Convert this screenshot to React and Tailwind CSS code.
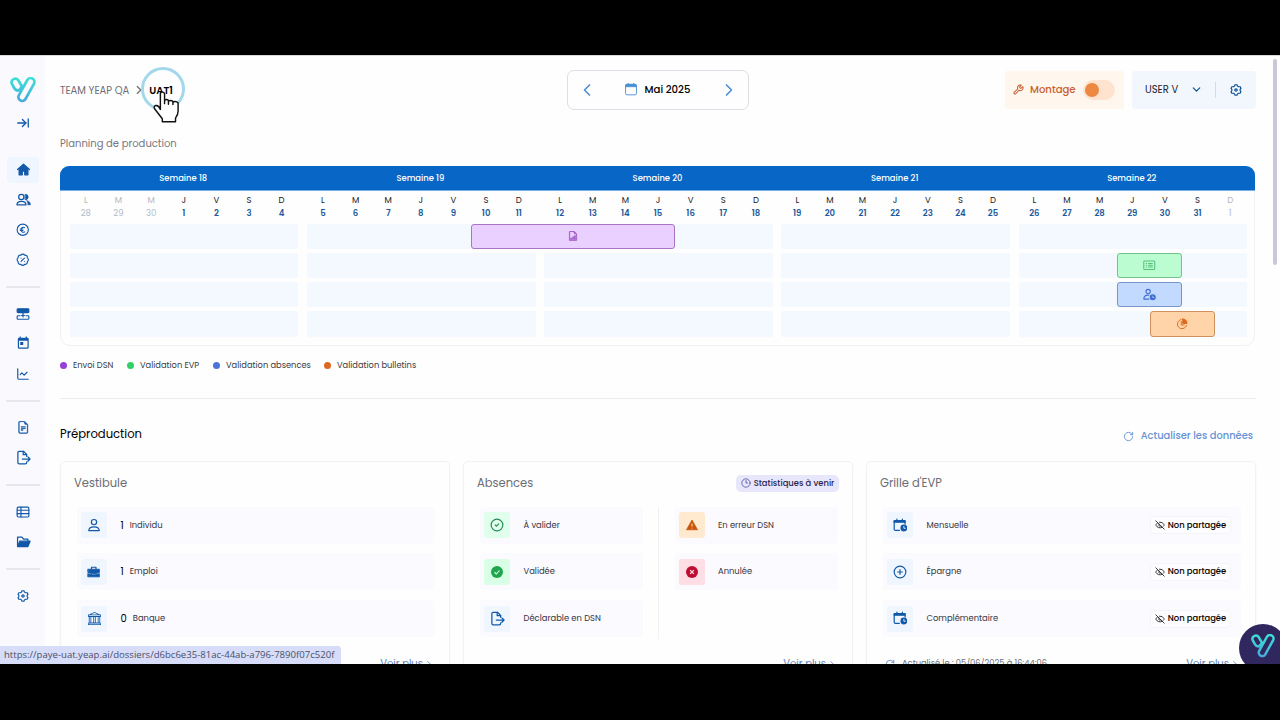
import { ArrowRightToLine, ChevronLeft, ChevronRight, ChevronDown, Wrench, RotateCw, Clock3, EyeOff, CirclePlus, CircleCheck, BadgePercent, ChartLine } from 'lucide-react';
import { BsBank, BsFileEarmarkText, BsFileEarmarkBarGraph } from 'react-icons/bs';
import { RiSettings3Line } from 'react-icons/ri';
import { MdToday } from 'react-icons/md';

const WEEKS = [18, 19, 20, 21, 22];
const LETTERS = ['L', 'M', 'M', 'J', 'V', 'S', 'D'];
const FIRST_DAY = -2; // monday 28 april
const DAY_W = 32.69;
const WEEK_W = 237.2;

function Svg({ size = 14, children, className = '' }) {
  return (
    <svg width={size} height={size} viewBox="0 0 24 24" fill="none" stroke="currentColor" strokeWidth="2" strokeLinecap="round" strokeLinejoin="round" className={className}>
      {children}
    </svg>
  );
}

function Logo({ id, className }) {
  return (
    <svg viewBox="0 0 26 26" fill="none" stroke={`url(#${id})`} strokeWidth="2.7" strokeLinecap="round" strokeLinejoin="round" className={className}>
      <defs>
        <linearGradient id={id} x1="0" y1="0" x2="0" y2="26" gradientUnits="userSpaceOnUse">
          <stop offset="0" stopColor="#3be3d6" />
          <stop offset="1" stopColor="#47a6dc" />
        </linearGradient>
      </defs>
      <path d="M12 9.500 8.300 3.300A3.700 3.700 0 0 0 1.800 6.700L4.200 11A4.500 4.500 0 0 0 9 13.300L12 9.500" />
      <path d="M17.300 3 8.900 18.200A3.750 3.750 0 0 0 15.500 22L23.900 6.800A3.750 3.750 0 0 0 17.300 3Z" />
    </svg>
  );
}

const Home = () => (
  <Svg size={15}>
    <path d="M2.500 12 12 3.500 21.500 12" />
    <path d="M5 11v9.500h5v-6h4v6h5V11l-7-6z" fill="currentColor" />
  </Svg>
);
const Users = () => (
  <Svg size={15}>
    <circle cx="8.500" cy="8" r="4.200" />
    <path d="M1.500 20.500c0-7.500 14.500-7.500 14.500 0z" />
    <path d="M15 3.500a4.500 4.500 0 0 1 0 9zM17.500 14c4 .8 5.500 3 5.500 6.500h-4c0-3-.3-4.500-1.500-6.500z" fill="currentColor" strokeWidth="1" />
  </Svg>
);
const Euro = () => (
  <Svg size={13.5}>
    <circle cx="12" cy="12" r="10" />
    <path d="M15.500 8.300c-3-2.200-6.500 0-6.500 3.700s3.500 5.900 6.500 3.700M7.500 10.800h5M7.500 13.400h5" strokeWidth="1.800" />
  </Svg>
);
const Blocks = () => (
  <Svg size={14}>
    <rect x="2" y="3" width="20" height="6.500" rx="1.500" fill="currentColor" />
    <path d="M12 10v7M9.500 14.500h5M7 15H3.500a1.500 1.500 0 0 0-1.500 1.500v3A1.500 1.500 0 0 0 3.500 21h17a1.500 1.500 0 0 0 1.500-1.500v-3a1.500 1.500 0 0 0-1.500-1.500H17" />
  </Svg>
);
const FileExport = ({ size = 15 }) => (
  <Svg size={size}>
    <path d="M17 10V7l-5-5H5a2 2 0 0 0-2 2v16a2 2 0 0 0 2 2h10a2 2 0 0 0 2-2v-1" />
    <path d="M11.500 2v5.500H17" />
    <path d="M10 14.500h12.500M19 11l3.500 3.500L19 18" />
  </Svg>
);
const Table = () => (
  <Svg size={14}>
    <rect x="2" y="3.500" width="20" height="17" rx="2" />
    <path d="M2 9h20M2 14.800h20M8.500 3.500v17" />
  </Svg>
);
const Folder = () => (
  <Svg size={15}>
    <path d="M2.500 19V5h7l2.500 3h7v3" />
    <path d="M2.500 20 6 11.500h16.500L19 20z" fill="currentColor" />
  </Svg>
);
const Person = () => (
  <Svg size={14}>
    <circle cx="12" cy="7" r="4.500" />
    <path d="M3 21.500c.5-8.500 17.500-8.500 18 0z" />
  </Svg>
);
const Briefcase = () => (
  <Svg size={13.5}>
    <path d="M2 7.500h20v6l-8 2h-4l-8-2zM2 15.500l8 2h4l8-2V21H2z" fill="currentColor" strokeWidth="1.500" />
    <path d="M8 7V4h8v3" />
  </Svg>
);
const CalClock = () => (
  <Svg size={14.5}>
    <path d="M10.500 20.500H4a2 2 0 0 1-2-2V5h18v5" />
    <path d="M2 4.500h18V7H2z" fill="currentColor" />
    <path d="M6.500 2v3M15.500 2v3" />
    <circle cx="18" cy="16.500" r="4.700" fill="currentColor" />
    <path d="M18 14v3h2.300" stroke="#eef5ff" strokeWidth="1.500" />
  </Svg>
);
const PersonClock = () => (
  <Svg size={13}>
    <circle cx="9.500" cy="6.500" r="4" />
    <path d="M11 20.500H1.500c0-6 4-8 9.500-7.200" />
    <circle cx="18" cy="17" r="4.600" fill="currentColor" />
    <path d="M18 15v2.500h2" stroke="#c4daff" strokeWidth="1.300" />
  </Svg>
);
const ListCard = () => (
  <Svg size={12.5}>
    <rect x="1.500" y="4" width="21" height="16" rx="1.500" />
    <path d="M6 8.500h1M6 12h1M6 15.500h1M10.500 8.500H18M10.500 12H18M10.500 15.500H18" />
  </Svg>
);
const Pie = () => (
  <Svg size={12}>
    <path d="M10 3a9.300 9.300 0 1 0 11 12" />
    <path d="M10.500 7v7h6" />
    <path d="M13.500 2v9H22a9 9 0 0 0-8.500-9z" fill="currentColor" />
  </Svg>
);
const Warning = () => (
  <svg width="12" height="12" viewBox="0 0 24 24">
    <path d="M12 2 23 21.500H1z" fill="#c9540c" stroke="#c9540c" strokeWidth="1.500" strokeLinejoin="round" />
    <path d="M12 9v6M12 17.500v1.500" stroke="#ffe3c2" strokeWidth="2" />
  </svg>
);
const CheckSolid = () => (
  <svg width="12" height="12" viewBox="0 0 24 24">
    <circle cx="12" cy="12" r="12" fill="#1fa64c" />
    <path d="m7 12.500 3.500 3.500 6.500-7" fill="none" stroke="#dcffe8" strokeWidth="2.200" />
  </svg>
);
const CrossSolid = () => (
  <svg width="12" height="12" viewBox="0 0 24 24">
    <circle cx="12" cy="12" r="12" fill="#bd0d33" />
    <path d="m8.300 8.300 7.400 7.400m0-7.400-7.400 7.400" stroke="#ffe1e7" strokeWidth="2.600" />
  </svg>
);

const NAV = [
  [<Home />, <Users />, <Euro />, <BadgePercent size={13.5} />],
  [<Blocks />, <MdToday size={14.5} />, <ChartLine size={14} />],
  [<BsFileEarmarkText size={12.5} strokeWidth={0.5} />, <FileExport />],
  [<Table />, <Folder />],
  [<RiSettings3Line size={14} />],
];

function Sidebar() {
  return (
    <aside className="flex w-[45px] shrink-0 flex-col items-center bg-[#faf9fe] pr-px text-[#1159a8]">
      <Logo id="logo-side" className="mt-[21px] ml-[2px] h-[26px] w-[26px]" />
      <ArrowRightToLine size={14} strokeWidth={2.200} className="mt-[13px] ml-[2px]" />
      <nav className="mt-[24.500px] flex w-full flex-col items-center pl-[2px]">
        {NAV.map((group, g) => (
          <div key={g} className="flex flex-col items-center">
            {g > 0 && <div className="my-[11px] h-[2px] w-[34px] bg-[#e8e7ee]" />}
            {group.map((icon, i) => (
              <div key={i} className="flex h-[30px] items-center">
                <div className={`flex h-[26px] w-8 items-center justify-center rounded-sm ${g === 0 && i === 0 ? 'bg-[#eff6ff]' : ''}`}>{icon}</div>
              </div>
            ))}
          </div>
        ))}
      </nav>
    </aside>
  );
}

function Header() {
  return (
    <header className="grid h-10 grid-cols-[1fr_auto_1fr] items-center">
      <div className="flex items-center pt-px text-[10px] text-[#6d6d75]">
        <span>TEAM YEAP QA</span>
        <ChevronRight size={14} strokeWidth={2} className="ml-[3px]" />
        <span className="ml-[3px] font-semibold text-black">UAT1</span>
      </div>
      <div className="flex h-10 w-[182px] items-center justify-between rounded-[7px] border border-[#dedee6] px-[9px] text-[#4b8fd6]">
        <ChevronLeft size={20} strokeWidth={2} />
        <div className="flex items-center gap-[7px]">
          <svg width="12" height="14" viewBox="0 0 13 14" fill="none" stroke="currentColor">
            <rect x=".6" y="2" width="11.800" height="11.300" rx="1.500" />
            <path d="M1 2h11v2.500H1z" fill="currentColor" />
            <path d="M3.500 .5v2M9.500 .5v2" />
          </svg>
          <span className="text-[10.200px] font-medium text-black">Mai 2025</span>
        </div>
        <ChevronRight size={20} strokeWidth={2} />
      </div>
      <div className="flex h-[38px] justify-end gap-2">
        <div className="flex w-[119px] items-center rounded-[3px] bg-[#fff6ee] pl-[8px] text-[#c85f2c]">
          <Wrench size={11} strokeWidth={2.200} className="shrink-0" />
          <span className="ml-[6px] w-[45px] text-[10.100px] font-medium">Montage</span>
          <div className="ml-[8px] h-5 w-8 rounded-full bg-[#ffe3cf] p-[3px] pl-[2px]">
            <div className="h-[14px] w-[14px] rounded-full bg-[#ec8840]" />
          </div>
        </div>
        <div className="flex w-[124px] items-center rounded-[3px] bg-[#f2f7fe] pl-[13px] text-[#0b4f93]">
          <span className="w-[34px] whitespace-nowrap text-[10px] text-[#26262e]">USER V</span>
          <ChevronDown size={13} strokeWidth={2.200} className="ml-[11px]" />
          <div className="ml-[12px] h-4 w-px bg-[#d3dbe8]" />
          <RiSettings3Line size={14} className="ml-[13px]" />
        </div>
      </div>
    </header>
  );
}

// start / end are counted in days from monday 28 april
const EVENTS = [
  { start: 12, end: 17, cls: 'bg-[#ead0fe] border-[#a875c6] text-[#9a4fc0]', icon: <BsFileEarmarkBarGraph size={10} strokeWidth={0.5} /> },
  { start: 31, end: 32, cls: 'bg-[#bbfdd0] border-[#74c18e] text-[#55c27a]', icon: <ListCard /> },
  { start: 31, end: 32, cls: 'bg-[#c2daff] border-[#7894c9] text-[#416ed0]', icon: <PersonClock /> },
  { start: 32, end: 33, cls: 'bg-[#ffd4a8] border-[#cf9060] text-[#dc6a1b]', icon: <Pie /> },
];

const dayX = (n) => Math.floor(n / 7) * WEEK_W + (n % 7) * DAY_W;

function Planning() {
  return (
    <section className="mt-3 h-[179.500px] w-[1195px] rounded-[10px] border border-[#f0f0f5]">
      <div className="-mx-px -mt-px grid h-[25px] grid-cols-5 gap-[8.7px] rounded-t-[9px] border-b border-[#75aee8] bg-[#0866c6] px-[9px]">
        {WEEKS.map((w) => (
          <div key={w} className="flex items-center justify-center text-[8.400px] font-medium text-white">Semaine {w}</div>
        ))}
      </div>
      <div className="mt-[3px] grid grid-cols-5 gap-[8.700px] pr-[7.500px] pl-[8.500px]">
        {WEEKS.map((w, wi) => (
          <div key={w} className="grid grid-cols-7 text-center text-[8.500px] leading-[12.500px]">
            {LETTERS.map((l, di) => {
              const n = FIRST_DAY + wi * 7 + di;
              const out = n < 1 || n > 31;
              const day = n < 1 ? n + 30 : n > 31 ? n - 31 : n;
              return (
                <div key={di}>
                  <div className={out ? 'text-[#b5b5bd]' : 'text-[#202028]'}>{l}</div>
                  <div className={out ? 'text-[#b0bccd]' : 'font-semibold text-[#1d5a9c]'}>{day}</div>
                </div>
              );
            })}
          </div>
        ))}
      </div>
      <div className="mt-[4.500px] flex flex-col gap-[3.600px] pr-[7px] pl-[9px]">
        {EVENTS.map((e, i) => (
          <div key={i} className="relative grid grid-cols-5 gap-[8.700px]">
            {WEEKS.map((w) => (
              <div key={w} className="h-[25.600px] rounded-[2px] bg-[#f4f8ff]" />
            ))}
            <div
              className={`absolute inset-y-0 flex items-center justify-center rounded-[3px] border ${e.cls}`}
              style={{ left: dayX(e.start), width: dayX(e.end) + DAY_W - dayX(e.start) }}
            >
              {e.icon}
            </div>
          </div>
        ))}
      </div>
    </section>
  );
}

function Legend() {
  return (
    <div className="mt-[11.500px] flex h-4 items-center text-[8.300px] text-[#3a3a42]">
      <div className="flex w-[67px] items-center gap-[6px] whitespace-nowrap"><i className="h-[7px] w-[7px] rounded-full bg-[#9540d8]" />Envoi DSN</div>
      <div className="flex w-[86px] items-center gap-[6px] whitespace-nowrap"><i className="h-[7px] w-[7px] rounded-full bg-[#32cf62]" />Validation EVP</div>
      <div className="flex w-[111px] items-center gap-[6px] whitespace-nowrap"><i className="h-[7px] w-[7px] rounded-full bg-[#4b74d8]" />Validation absences</div>
      <div className="flex items-center gap-[6px] whitespace-nowrap"><i className="h-[7px] w-[7px] rounded-full bg-[#dd6820]" />Validation bulletins</div>
    </div>
  );
}

function Card({ title, badge, children, note }) {
  return (
    <div className="flex h-[230px] flex-col rounded-[5px] border border-[#f2f2f6] px-[13px] pt-[12px] shadow-[0_1px_2px_rgba(40,40,80,0.05)]">
      <div className="flex h-[18px] items-center justify-between text-[11.500px] text-[#6d6d75]">
        <span className="pt-[2px]">{title}</span>
        {badge}
      </div>
      <div className="mt-[14.500px] h-[132px]">{children}</div>
      <div className="mt-[17px] flex h-4 items-center justify-between pr-[2px] pl-[5px] text-[10px] text-[#5b83b8]">
        <span className="flex items-center gap-[7px] text-[8.300px] text-[#6d6d75]">{note}</span>
        <span className="flex items-center gap-px">Voir plus <ChevronRight size={10} /></span>
      </div>
    </div>
  );
}

function Item({ icon, tone = 'bg-[#eff6ff] text-[#1159a8]', count, label, right }) {
  return (
    <div className="flex h-[37px] items-center rounded-[3px] bg-[#fbfaff] pl-1 text-[8.400px] text-[#35353d]">
      <div className={`flex h-[26px] w-[26px] items-center justify-center rounded-[3px] ${tone}`}>{icon}</div>
      <span className="ml-[13.500px] flex items-center whitespace-nowrap">
        {count != null && <span className="mr-[6px] text-[10px] text-black">{count}</span>}
        {label}
      </span>
      {right}
    </div>
  );
}

function Shared() {
  return (
    <span className="ml-auto mr-[10px] flex h-[18px] w-[81px] items-center justify-center gap-[3px] rounded-[4px] border border-[#f5f4f9] bg-[#fdfcff] text-[8.400px] font-medium whitespace-nowrap text-black">
      <EyeOff size={10} strokeWidth={2.300} className="text-[#33333b]" /> Non partagée
    </span>
  );
}

function HandCursor() {
  return (
    <div className="absolute top-[11px] left-[141px] h-11 w-11 rounded-full border-[3px] border-[#a3d8ec]">
      <svg width="29" height="35" viewBox="455 118 90 108" className="absolute top-[20px] left-[8px]">
        <path
          d="M481 178V130q0-6 6-6t7 6v30-10q6-5 12 0v12-10q7-4 14 1v10-8q10-4 16 3v25q0 12-8 22v11H487v-9L463 176q-4-8 4-10t14 12z"
          fill="#fff"
          stroke="#111"
          strokeWidth="4.500"
          strokeLinejoin="round"
        />
      </svg>
    </div>
  );
}

export default function App() {
  return (
    <div className="h-[720px] w-[1280px] overflow-hidden bg-black pt-[55px] font-['Poppins','Inter',sans-serif]">
      <div className="relative flex h-[609px] overflow-hidden border-t border-[#d9d9d9] bg-[#fefefe]">
        <Sidebar />
        <main className="w-[1211px] shrink-0 pt-[13.500px] pl-[15px]">
          <Header />
          <h2 className="mt-[24.500px] h-5 text-[10px] leading-5 text-[#77777f]">Planning de production</h2>
          <Planning />
          <Legend />
          <div className="mt-[25px] h-px bg-[#ebebef]" />
          <div className="mt-[25px] flex h-5 items-center justify-between">
            <h2 className="pt-[2px] text-[11.600px] text-black">Préproduction</h2>
            <button className="mt-[5px] mr-[3px] flex items-center gap-[7px] text-[9.900px] font-medium text-[#6592d2]">
              <RotateCw size={11} /> Actualiser les données
            </button>
          </div>
          <div className="mt-[17px] grid grid-cols-3 gap-[13px]">
            <Card title="Vestibule">
              <div className="flex flex-col gap-[9.800px] pr-[2px] pl-[3px]">
                <Item icon={<Person />} count={1} label="Individu" />
                <Item icon={<Briefcase />} count={1} label="Emploi" />
                <Item icon={<BsBank size={13} />} count={0} label="Banque" />
              </div>
            </Card>
            <Card
              title="Absences"
              badge={
                <span className="flex h-[17px] w-[103px] items-center justify-center gap-[3px] rounded-[5px] bg-[#e8e6fb] text-[8.400px] font-medium whitespace-nowrap text-[#282553]">
                  <Clock3 size={10} className="text-[#5650a5]" /> Statistiques à venir
                </span>
              }
            >
              <div className="flex h-full pl-[3px]">
                <div className="flex w-[163px] flex-col gap-[9.800px]">
                  <Item icon={<CircleCheck size={14} />} tone="bg-[#e0ffec] text-[#258a54]" label="À valider" />
                  <Item icon={<CheckSolid />} tone="bg-[#d9ffe6]" label="Validée" />
                  <Item icon={<FileExport />} label="Déclarable en DSN" />
                </div>
                <div className="ml-[15px] w-px bg-[#f1f1f5]" />
                <div className="ml-[15.500px] flex w-[163px] flex-col gap-[9.800px]">
                  <Item icon={<Warning />} tone="bg-[#ffead0]" label="En erreur DSN" />
                  <Item icon={<CrossSolid />} tone="bg-[#ffdde5]" label="Annulée" />
                </div>
              </div>
            </Card>
            <Card title="Grille d'EVP" note={<><RotateCw size={10} className="text-[#5b83b8]" /> Actualisé le : 05/06/2025 à 16:44:06</>}>
              <div className="flex flex-col gap-[9.800px] pr-px pl-[3px]">
                <Item icon={<CalClock />} label="Mensuelle" right={<Shared />} />
                <Item icon={<CirclePlus size={14} />} label="Épargne" right={<Shared />} />
                <Item icon={<CalClock />} label="Complémentaire" right={<Shared />} />
              </div>
            </Card>
          </div>
        </main>

        <HandCursor />
        <div className="absolute top-[3px] right-[3px] h-[206px] w-1 rounded-full bg-[#cbc7d8]" />
        <div className="absolute top-[568px] left-[1239px] flex h-12 w-12 items-center justify-center rounded-full bg-[#30275f]">
          <Logo id="logo-chat" className="-mt-[4px] h-[24px] w-[24px]" />
        </div>
        <div className="absolute bottom-0 left-0 flex h-[18px] w-[341px] items-center rounded-tr-[3px] bg-[#d7ddf8] pt-px pl-1 font-['Open_Sans','Noto_Sans',sans-serif] text-[9.570px] whitespace-nowrap text-[#4a5068]">
          https://paye-uat.yeap.ai/dossiers/d6bc6e35-81ac-44ab-a796-7890f07c520f
        </div>
      </div>
    </div>
  );
}
